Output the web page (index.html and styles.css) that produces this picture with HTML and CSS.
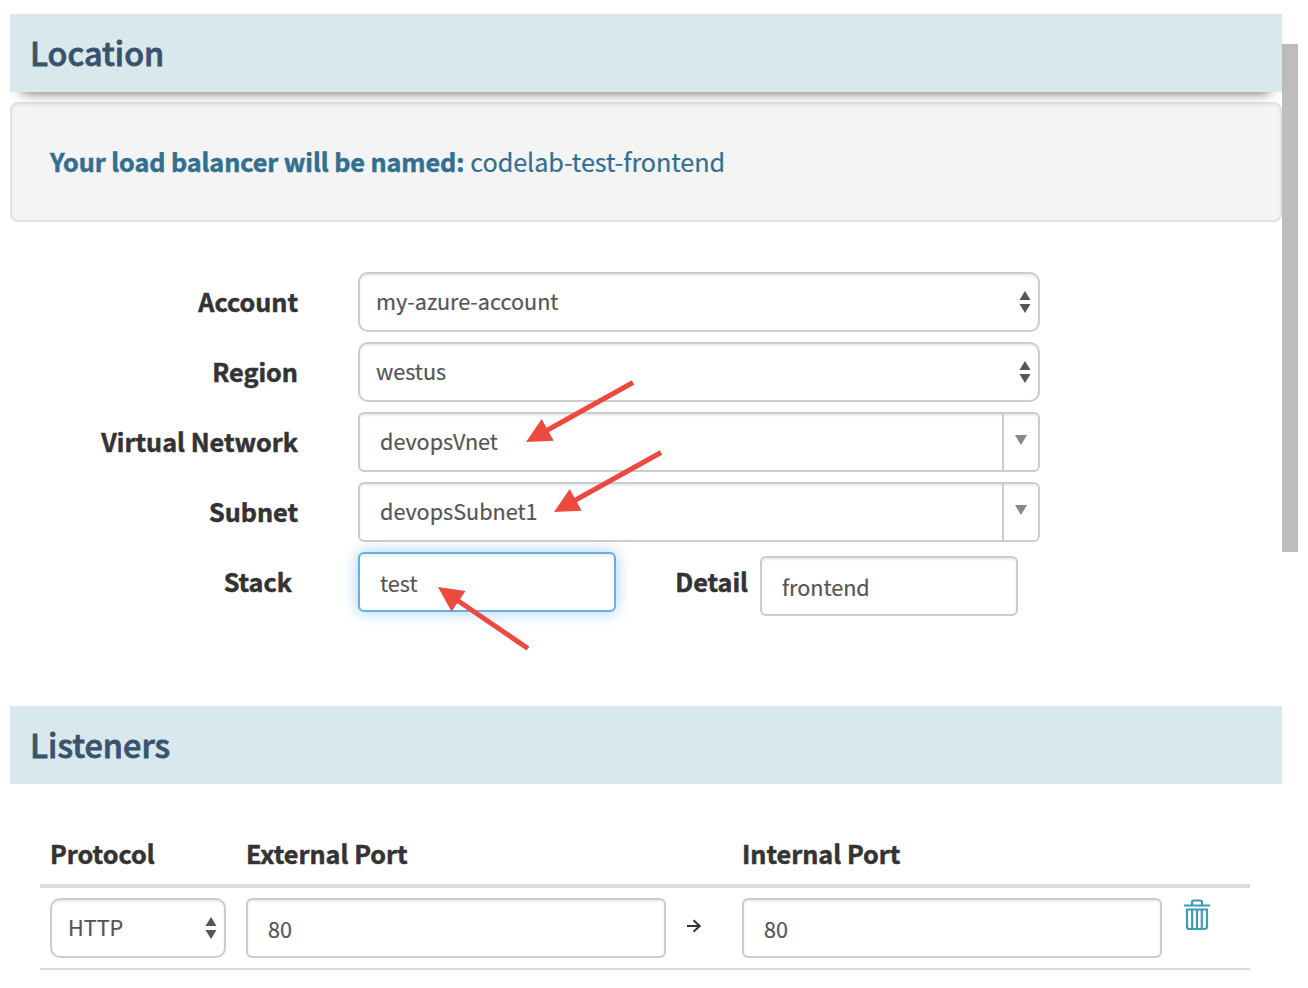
FILE: index.html
```html
<!DOCTYPE html>
<html lang="en">
<head>
<meta charset="utf-8">
<title>Load balancer</title>
<link rel="stylesheet" href="styles.css">
</head>
<body>
<div class="modal">
  <main class="content">
    <h2 class="heading heading-stuck">Location</h2>
    <div class="well"><strong class="lead">Your load balancer will be named:</strong><span class="lb-name">codelab-test-frontend</span></div>
    <section class="form">
      <div class="row"><label class="label">Account</label>
        <div class="control select"><span class="val">my-azure-account</span><svg class="updown" viewBox="0 0 12 22"><path d="M6 0 11.500 9H.5zM6 22 .5 13h11z"/></svg></div></div>
      <div class="row"><label class="label">Region</label>
        <div class="control select"><span class="val">westus</span><svg class="updown" viewBox="0 0 12 22"><path d="M6 0 11.500 9H.5zM6 22 .5 13h11z"/></svg></div></div>
      <div class="row"><label class="label">Virtual Network</label>
        <div class="control combo"><span class="val">devopsVnet</span><span class="toggle"><svg class="caret" viewBox="0 0 12 10"><path d="M0 0h12L6 10z"/></svg></span></div></div>
      <div class="row"><label class="label">Subnet</label>
        <div class="control combo"><span class="val">devopsSubnet1</span><span class="toggle"><svg class="caret" viewBox="0 0 12 10"><path d="M0 0h12L6 10z"/></svg></span></div></div>
      <div class="row row-split"><label class="label label-stack">Stack</label>
        <div class="control input focused"><span class="val">test</span></div>
        <label class="label label-detail">Detail</label>
        <div class="control input detail"><span class="val">frontend</span></div></div>
    </section>
    <h2 class="heading">Listeners</h2>
    <section class="listeners">
      <div class="grid head"><span>Protocol</span><span>External Port</span><span></span><span>Internal Port</span></div>
      <div class="grid body">
        <div class="control select protocol"><span class="val">HTTP</span><svg class="updown" viewBox="0 0 12 22"><path d="M6 0 11.500 9H.5zM6 22 .5 13h11z"/></svg></div>
        <div class="control input"><span class="val">80</span></div>
        <svg class="arrow" viewBox="0 0 14 14"><path d="M0 7h12.500M6.500 1.200 12.700 7l-6.200 5.800"/></svg>
        <div class="control input"><span class="val">80</span></div>
        <svg class="trash" viewBox="0 0 26 32"><path d="M0 6.500h26M8 6V3.200Q8 1.500 9.700 1.500h6.600Q18 1.500 18 3.200V6M3 10.500h20V27.500q0 2.500-2.500 2.500h-15Q3 30 3 27.500zM8.200 11v18.500M13 11v18.500M17.800 11v18.500"/></svg>
      </div>
    </section>
  </main>
  <div class="scrollbar"></div>
</div>
<svg class="annotations" viewBox="0 0 1308 988">
  <path class="shaft" d="M633 382.500 544 432M661 452.500 572 502M528 648.500 454 598"/>
  <path class="tip" d="M526 442 541.700 419 553.700 440.800zM554 512 569.700 489 581.700 510.800zM438 587 465.500 591 451.500 611.500z"/>
</svg>
</body>
</html>
```
FILE: styles.css
```css
* { box-sizing: border-box; }
body {
  margin: 0;
  height: 988px;
  overflow: hidden;
  background: #fff;
  color: #333;
  font: 21.6px/30px "Noto Sans CJK SC", "Open Sans", sans-serif;
}
.modal { display: flex; padding: 14px 0 0 10px; }
.content { width: 1272px; }
.scrollbar { width: 16px; height: 508px; margin-top: 30px; background: #bdbdbd; }
.heading {
  display: flex;
  align-items: center;
  height: 78px;
  margin: 0;
  padding: 0 20px 2px;
  background: #d9e8ed;
  color: #38546d;
  font-size: 32.4px;
  font-weight: 500;
  line-height: 40px;
  -webkit-text-stroke: .8px #38546d;
}
.heading-stuck { position: relative; box-shadow: 0 12px 12px -12px #555; }
.well {
  display: flex;
  align-items: center;
  gap: 6px;
  height: 120px;
  margin-top: 10px;
  padding: 0 38px 2px;
  border: 2px solid #e2e2e2;
  border-radius: 8px;
  background: #f4f4f4;
  box-shadow: inset 0 2px 2px rgba(0, 0, 0, .04);
  color: #31708f;
  font-size: 25.2px;
}
.lead { letter-spacing: -.09px; -webkit-text-stroke: .5px #31708f; }
.lb-name { letter-spacing: -.08px; -webkit-text-stroke: .2px #31708f; }
.form { display: flex; flex-direction: column; gap: 10px; padding-top: 50px; height: 484px; }
.row { display: flex; align-items: center; height: 60px; }
.label { width: 288px; margin-right: 60px; padding-bottom: 2px; text-align: right; font-size: 25.2px; font-weight: 700; white-space: nowrap; -webkit-text-stroke: .5px #333; }
.control {
  display: flex;
  align-items: center;
  justify-content: space-between;
  width: 682px;
  height: 60px;
  border: 2px solid #ccc;
  border-radius: 6px;
  background: #fff;
  box-shadow: inset 0 2px 2px rgba(0, 0, 0, .075);
  color: #555;
}
.val { padding-bottom: 2px; -webkit-text-stroke: .2px #555; }
.select { border-radius: 10px; padding: 0 7.5px 0 16px; }
.updown { width: 12px; height: 22px; fill: #555; }
.combo { padding-left: 20px; }
.toggle { display: flex; justify-content: center; width: 36px; height: 56px; padding-top: 21px; border-left: 2px solid #ccc; }
.caret { width: 12px; height: 10px; fill: #888; }
.input { width: 258px; padding: 4px 20px 0; }
.focused { border-color: #66afe9; box-shadow: inset 0 2px 2px rgba(0, 0, 0, .075), 0 0 16px rgba(102, 175, 233, .6); }
.label-stack { width: 282px; margin-right: 66px; }
.label-detail { width: 132px; margin-right: 12px; }
.detail { margin-top: 8px; }
.listeners { padding: 40px 32px 0 30px; }
.grid { display: grid; grid-template-columns: 176px 420px 36px 420px 26px; column-gap: 20px; padding: 0 10px; }
.head { height: 64px; padding-top: 14px; border-bottom: 4px solid #ddd; font-size: 25.2px; font-weight: 700; -webkit-text-stroke: .5px #333; }
.body { height: 82px; padding-top: 10px; border-bottom: 2px solid #ddd; }
.body .control { width: 100%; }
.arrow { width: 14px; height: 14px; margin: 21px 0 0 1px; fill: none; stroke: #333; stroke-width: 2; }
.trash { width: 26px; height: 32px; margin: 1px 0 0 2px; fill: none; stroke: #419bb3; stroke-width: 2.2; }
.annotations { position: absolute; left: 0; top: 0; width: 1308px; height: 988px; }
.shaft { fill: none; stroke: #eb4b3f; stroke-width: 5; }
.tip { fill: #eb4b3f; }
```
